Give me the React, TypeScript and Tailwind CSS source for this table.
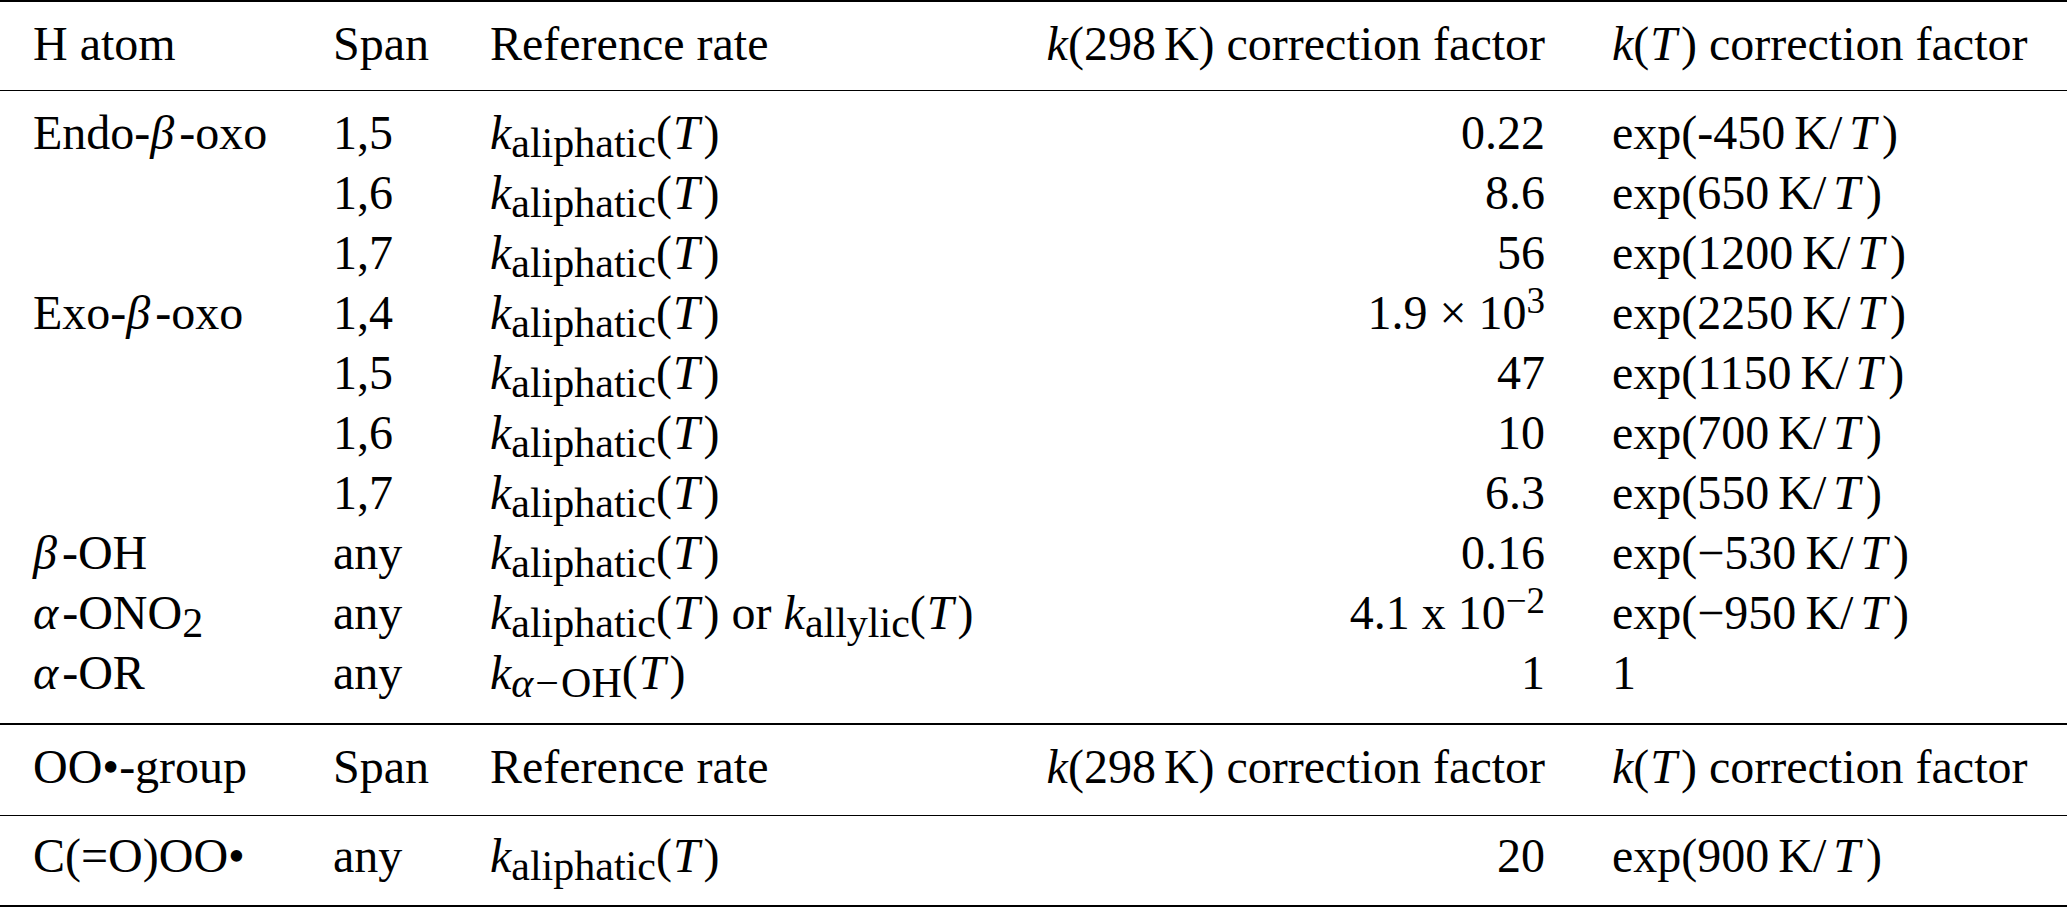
import React from 'react';

const Sub: React.FC<{ children: React.ReactNode }> = ({ children }) => (
  <span className="relative top-[8px] text-[42px] leading-none">{children}</span>
);

const Sup: React.FC<{ children: React.ReactNode }> = ({ children }) => (
  <span className="relative -top-[16px] text-[37px] leading-none">{children}</span>
);

const T = () => <i className="ml-[1px] mr-[4px]">T</i>;

const Rate: React.FC<{ sub: React.ReactNode }> = ({ sub }) => (
  <>
    <i>k</i>
    <Sub>{sub}</Sub>(<T />)
  </>
);

const Exp: React.FC<{ n: string }> = ({ n }) => (
  <>
    exp({n}
    <span className="ml-[9px]">K/</span>
    <i className="ml-[7px] mr-[6px]">T</i>)
  </>
);

const beta = <i className="mr-[5px]">β</i>;
const alpha = <i className="mr-[4px]">α</i>;

type Row = {
  group: React.ReactNode;
  span: string;
  rate: React.ReactNode;
  k298: React.ReactNode;
  kT: React.ReactNode;
};

const ali = <Rate sub="aliphatic" />;

const rows: Row[] = [
  { group: <>Endo-{beta}-oxo</>, span: '1,5', rate: ali, k298: '0.22', kT: <Exp n="-450" /> },
  { group: '', span: '1,6', rate: ali, k298: '8.6', kT: <Exp n="650" /> },
  { group: '', span: '1,7', rate: ali, k298: '56', kT: <Exp n="1200" /> },
  {
    group: <>Exo-{beta}-oxo</>,
    span: '1,4',
    rate: ali,
    k298: (
      <>
        1.9 × 10<Sup>3</Sup>
      </>
    ),
    kT: <Exp n="2250" />,
  },
  { group: '', span: '1,5', rate: ali, k298: '47', kT: <Exp n="1150" /> },
  { group: '', span: '1,6', rate: ali, k298: '10', kT: <Exp n="700" /> },
  { group: '', span: '1,7', rate: ali, k298: '6.3', kT: <Exp n="550" /> },
  { group: <>{beta}-OH</>, span: 'any', rate: ali, k298: '0.16', kT: <Exp n="−530" /> },
  {
    group: (
      <>
        {alpha}-ONO<Sub>2</Sub>
      </>
    ),
    span: 'any',
    rate: (
      <>
        {ali} or <Rate sub="allylic" />
      </>
    ),
    k298: (
      <>
        4.1 x 10<Sup>−2</Sup>
      </>
    ),
    kT: <Exp n="−950" />,
  },
  {
    group: <>{alpha}-OR</>,
    span: 'any',
    rate: (
      <Rate
        sub={
          <>
            <i>α</i>
            <span className="mx-[2px]">−</span>OH
          </>
        }
      />
    ),
    k298: '1',
    kT: '1',
  },
];

const Line: React.FC<Row> = ({ group, span, rate, k298, kT }) => (
  <div className="flex whitespace-nowrap pl-[33px]">
    <div className="w-[300px]">{group}</div>
    <div className="w-[157px]">{span}</div>
    <div className="w-[560px]">{rate}</div>
    <div className="flex w-[495px] justify-end">
      <span>{k298}</span>
    </div>
    <div className="pl-[67px]">{kT}</div>
  </div>
);

const headerCells = (first: string): Row => ({
  group: first,
  span: 'Span',
  rate: 'Reference rate',
  k298: (
    <>
      <i>k</i>(298<span className="ml-[8px]">K</span>) correction factor
    </>
  ),
  kT: (
    <>
      <i>k</i>(<T />) correction factor
    </>
  ),
});

export default function App() {
  return (
    <div className="min-h-screen w-[2067px] bg-white font-['Liberation_Serif',serif] text-[48px] leading-[60px] text-black">
      <div className="border-t-2 border-black pt-3 pb-4">
        <Line {...headerCells('H atom')} />
      </div>
      <div className="border-t-[1.5px] border-black pt-3 pb-5">
        {rows.map((r, i) => (
          <Line key={i} {...r} />
        ))}
      </div>
      <div className="border-t-2 border-black pt-3 pb-[18px]">
        <Line {...headerCells('OO•-group')} />
      </div>
      <div className="border-t-[1.5px] border-black pt-[10px] pb-[19px]">
        <Line group="C(=O)OO•" span="any" rate={ali} k298="20" kT={<Exp n="900" />} />
      </div>
      <div className="border-t-2 border-black" />
    </div>
  );
}
